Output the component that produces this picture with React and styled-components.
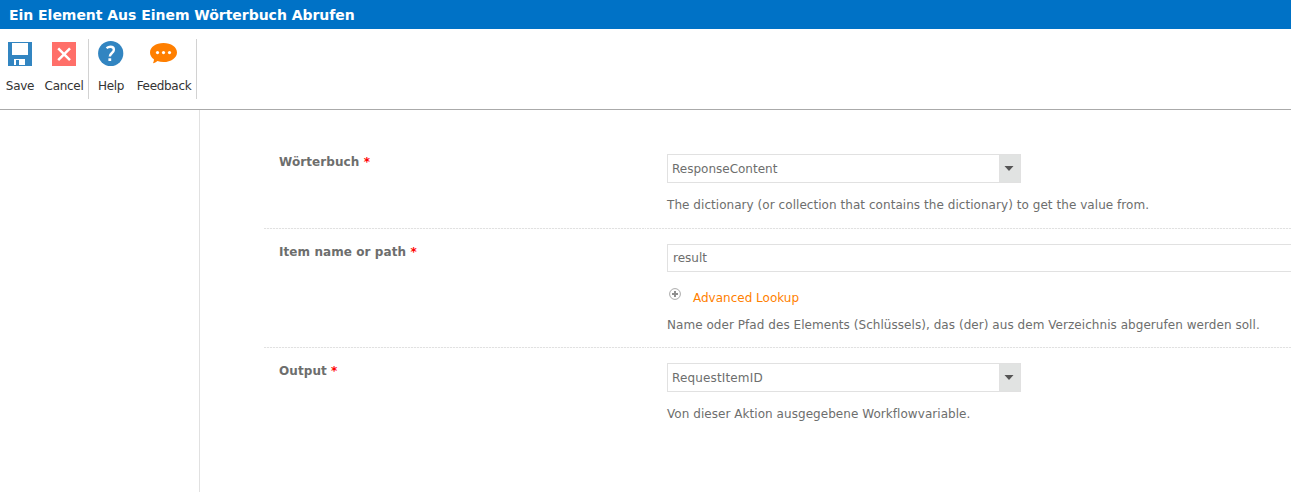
import React from "react";
import styled, { createGlobalStyle } from "styled-components";

const GlobalStyle = createGlobalStyle`
  * { box-sizing: border-box; }
  html, body { margin: 0; overflow: hidden; background: #fff; }
  body {
    font-family: "DejaVu Sans", sans-serif;
    font-size: 12px;
    color: #6d6e6d;
  }
`;

const Page = styled.div`
  display: flex;
  flex-direction: column;
  height: 492px;
  overflow: hidden;
`;

const TitleBar = styled.header`
  height: 29px;
  flex: none;
  padding-left: 9px;
  background: #0072c6;
  color: #fff;
  font-size: 14px;
  font-weight: bold;
  line-height: 30px;
  letter-spacing: -0.03px;
  white-space: nowrap;
`;

const Toolbar = styled.div`
  display: flex;
  height: 81px;
  flex: none;
  padding-top: 10px;
  border-bottom: 1px solid #aaa;
`;

const ToolGroup = styled.div`
  display: flex;
  height: 60px;
  width: ${(p) => p.$width}px;
  border-right: 1px solid #d2d2d2;
`;

const Tool = styled.button`
  display: flex;
  flex-direction: column;
  align-items: center;
  width: ${(p) => p.$width}px;
  padding: 0;
  border: 0;
  background: none;
  color: #333;
  font: inherit;
  line-height: 16px;
  letter-spacing: -0.3px;
  white-space: nowrap;
  svg { display: block; margin-bottom: 9px; flex: none; }
`;

const Body = styled.div`
  display: flex;
  flex: 1;
  min-height: 0;
`;

const Sidebar = styled.aside`
  width: 200px;
  flex: none;
  border-right: 1px solid #e1e1e1;
`;

const Form = styled.main`
  flex: 1;
  min-width: 0;
  padding: 29px 0 0 64px;
`;

const Row = styled.section`
  display: grid;
  grid-template-columns: 377px 4px 1fr;
  height: ${(p) => p.$height}px;
  column-gap: 1px;
`;

const Cell = styled.div`
  min-width: 0;
  padding: ${(p) => p.$padding};
  background: ${(p) =>
    p.$last
      ? "none"
      : "repeating-linear-gradient(90deg, #e1e1e1 0 2px, #fafafa 2px 3px) left bottom / 100% 1px no-repeat"};
  white-space: nowrap;
`;

const Label = styled.div`
  font-weight: bold;
  line-height: 16px;
  letter-spacing: 0.08px;
`;

const Required = styled.span`
  color: #f00;
`;

const Select = styled.div`
  display: flex;
  width: 354px;
  height: 29px;
  border: 1px solid #e1e1e1;
  line-height: 28px;
  letter-spacing: ${(p) => p.$spacing}px;
`;

const SelectValue = styled.span`
  flex: 1;
  padding-left: 4px;
`;

const SelectArrow = styled.span`
  display: flex;
  align-items: center;
  width: 21px;
  padding-left: 4px;
  background: #e1e3e2;
  border-left: 1px solid #e1e1e1;
`;

const TextField = styled.div`
  width: 700px;
  height: 28px;
  padding-left: 5px;
  border: 1px solid #e1e1e1;
  line-height: 26px;
`;

const Lookup = styled.a`
  display: flex;
  height: 16px;
  margin-top: 18px;
  padding-left: 2px;
  gap: 12px;
  color: #ff7f00;
  line-height: 16px;
  svg { display: block; margin-top: -2px; }
`;

const Hint = styled.div`
  margin-top: ${(p) => p.$top}px;
  line-height: 16px;
  letter-spacing: 0.05px;
`;

const SaveIcon = () => (
  <svg width="24" height="30" viewBox="0 0 24 30">
    <path fill="#3285c1" d="M0 3h24v24H0z" />
    <path fill="#fff" d="M4 4h16v12H4zM6 20h11v6H6z" />
    <path fill="#3285c1" d="M8 21h3v5H8z" />
  </svg>
);

const CancelIcon = () => (
  <svg width="24" height="30" viewBox="0 0 24 30">
    <path fill="#ff6f69" d="M0 3h24v24H0z" />
    <path stroke="#fff" strokeWidth="2.5" d="M6.200 9.400l11.800 11.800M18 9.400L6.200 21.200" />
  </svg>
);

const HelpIcon = () => (
  <svg width="26" height="30" viewBox="0 0 26 30">
    <circle cx="12.7" cy="14.5" r="12.6" fill="#3285c1" />
    <path fill="none" stroke="#fff" strokeWidth="2.4" d="M8.500 9.100C9.700 8.200 10.900 7.700 12.400 7.700c2.200 0 3.500 1.100 3.500 3 0 3.100-4.100 3.500-4.100 6.800" />
    <path fill="#fff" d="M10.400 19.300h2.800v2.700h-2.800z" />
  </svg>
);

const FeedbackIcon = () => (
  <svg width="28" height="30" viewBox="0.500 0 28 30">
    <path fill="#ff7f00" d="M14 4c7.6 0 13.5 4.1 13.5 9.4S21.6 23 14 23c-2.2 0-4.3-.3-6.1-1C6.7 23 5 24 3.4 24.2c.7-1.2 1.1-2.6 1-4C2 18.5.5 16.1.5 13.4.5 8.1 6.4 4 14 4z" />
    <circle cx="8" cy="13.6" r="1.6" fill="#fff" />
    <circle cx="14" cy="13.6" r="1.6" fill="#fff" />
    <circle cx="20" cy="13.6" r="1.6" fill="#fff" />
  </svg>
);

const PlusIcon = () => (
  <svg width="12" height="12" viewBox="0 0 12 12">
    <circle cx="6" cy="6" r="5.4" fill="none" stroke="#aaa" />
    <path fill="#8f8f8f" d="M5 3h2v2h2v2H7v2H5V7H3V5h2z" />
  </svg>
);

const Dropdown = ({ value, spacing = 0 }) => (
  <Select $spacing={spacing}>
    <SelectValue>{value}</SelectValue>
    <SelectArrow>
      <svg width="10" height="5" viewBox="0 0 10 5">
        <path fill="#555" d="M0.500 0h9L5 5z" />
      </svg>
    </SelectArrow>
  </Select>
);

const Field = ({ label, height, last, children }) => (
  <Row $height={height}>
    <Cell $last={last} $padding="15px 0 0 15px">
      <Label>{label} <Required>*</Required></Label>
    </Cell>
    <Cell $last={last} $padding="0" />
    <Cell $last={last} $padding="15px 0 0 20px">{children}</Cell>
  </Row>
);

export default function App() {
  return (
    <Page>
      <GlobalStyle />
      <TitleBar>Ein Element Aus Einem Wörterbuch Abrufen</TitleBar>
      <Toolbar>
        <ToolGroup $width={89}>
          <Tool $width={40}><SaveIcon />Save</Tool>
          <Tool $width={48}><CancelIcon />Cancel</Tool>
        </ToolGroup>
        <ToolGroup $width={108}>
          <Tool $width={44}><HelpIcon />Help</Tool>
          <Tool $width={62}><FeedbackIcon />Feedback</Tool>
        </ToolGroup>
      </Toolbar>
      <Body>
        <Sidebar />
        <Form>
          <Field label="Wörterbuch" height={90}>
            <Dropdown value="ResponseContent" />
            <Hint $top={14}>The dictionary (or collection that contains the dictionary) to get the value from.</Hint>
          </Field>
          <Field label="Item name or path" height={119}>
            <TextField>result</TextField>
            <Lookup><PlusIcon />Advanced Lookup</Lookup>
            <Hint $top={11}>Name oder Pfad des Elements (Schlüssels), das (der) aus dem Verzeichnis abgerufen werden soll.</Hint>
          </Field>
          <Field label="Output" height={90} last>
            <Dropdown value="RequestItemID" spacing={0.15} />
            <Hint $top={14}>Von dieser Aktion ausgegebene Workflowvariable.</Hint>
          </Field>
        </Form>
      </Body>
    </Page>
  );
}
